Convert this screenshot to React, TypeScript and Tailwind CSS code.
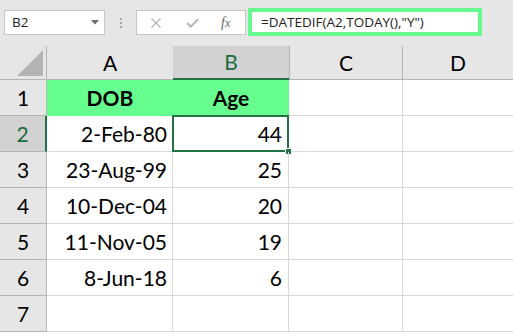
import React from "react";

const cellFont = { fontFamily: "Lato, 'Open Sans', sans-serif" };
const uiFont = { fontFamily: "'Open Sans', 'Noto Sans', sans-serif" };

const rows: { n: number; a: string; b: string }[] = [
  { n: 2, a: "2-Feb-80", b: "44" },
  { n: 3, a: "23-Aug-99", b: "25" },
  { n: 4, a: "10-Dec-04", b: "20" },
  { n: 5, a: "11-Nov-05", b: "19" },
  { n: 6, a: "8-Jun-18", b: "6" },
  { n: 7, a: "", b: "" },
];

export default function App() {
  return (
    <div className="w-[513px] h-[336px] overflow-hidden bg-white relative" style={cellFont}>
      {/* Formula bar area */}
      <div className="h-[46px] bg-[#e6e6e6] flex items-start">
        <div
          className="ml-[4px] mt-[10px] w-[101px] h-[25px] bg-white border border-[#c6c6c6] flex items-center justify-between pl-[7px] pr-[5px] text-[13.5px] text-[#222]"
          style={uiFont}
        >
          <span>B2</span>
          <svg width="8" height="5" viewBox="0 0 8 5">
            <path d="M0 0 H8 L4 4.5 Z" fill="#6d6d6d" />
          </svg>
        </div>
        <div className="ml-[15px] mt-[18px] flex flex-col gap-[2px]">
          <div className="w-[2px] h-[2px] bg-[#a9a9a9]" />
          <div className="w-[2px] h-[2px] bg-[#a9a9a9]" />
          <div className="w-[2px] h-[2px] bg-[#a9a9a9]" />
        </div>
        <div className="ml-[14px] mt-[10px] w-[110px] h-[25px] bg-white border border-[#c6c6c6] flex items-center">
          <svg className="ml-[13px]" width="12" height="10" viewBox="0 0 12 10">
            <path d="M1.5 0.5 L10.5 9.5 M10.5 0.5 L1.5 9.5" stroke="#b4b4b4" strokeWidth="1.4" fill="none" />
          </svg>
          <svg className="ml-[24px]" width="13" height="10" viewBox="0 0 13 10">
            <path d="M1 5 L4.8 8.6 L12 1.2" stroke="#b4b4b4" strokeWidth="2" fill="none" />
          </svg>
          <span
            className="ml-[22px] text-[14px] italic text-[#666] leading-none"
            style={{ fontFamily: "'Liberation Serif', serif" }}
          >
            f<span className="text-[12px]">x</span>
          </span>
        </div>
        <div
          className="ml-[2px] mt-[8px] w-[234px] h-[28px] bg-white border-[4px] border-[#68f890] flex items-center pl-[9px] text-[13.5px] text-[#222]"
          style={uiFont}
        >
          =DATEDIF(A2,TODAY(),"Y")
        </div>
      </div>

      {/* Grid */}
      <div className="grid grid-cols-[47px_126px_116px_114px_1fr] grid-rows-[34px_repeat(7,36px)] text-[21px] text-black">
        {/* Header row */}
        <div className="bg-[#e6e6e6] border-r border-b border-[#b5b5b5] relative">
          <svg className="absolute left-[17px] top-[4px]" width="27" height="27" viewBox="0 0 27 27">
            <path d="M26 0 V26 H0 Z" fill="#b3b3b3" />
          </svg>
        </div>
        <div className="bg-[#e6e6e6] border-b border-[#b5b5b5] flex items-center justify-center">A</div>
        <div className="bg-[#d2d2d2] border-b-2 border-[#217346] flex items-center justify-center text-[#1e6b41]">B</div>
        <div className="bg-[#e6e6e6] border-l border-r border-b border-[#b5b5b5] flex items-center justify-center">C</div>
        <div className="bg-[#e6e6e6] border-b border-[#b5b5b5] flex items-center justify-center">D</div>

        {/* Row 1 */}
        <div className="bg-[#e6e6e6] border-r border-b border-[#b5b5b5] flex items-center justify-center">1</div>
        <div className="bg-[#66ff8f] flex items-center justify-center font-bold">DOB</div>
        <div className="bg-[#66ff8f] flex items-center justify-center font-bold">Age</div>
        <div className="border-r border-b border-[#d9d9d9]" />
        <div className="border-b border-[#d9d9d9]" />

        {rows.map((r) => {
          const sel = r.n === 2;
          return (
            <React.Fragment key={r.n}>
              <div
                className={
                  sel
                    ? "bg-[#d2d2d2] border-r-2 border-r-[#217346] border-b border-b-[#b5b5b5] flex items-center justify-center text-[#1e6b41]"
                    : "bg-[#e6e6e6] border-r border-b border-[#b5b5b5] flex items-center justify-center"
                }
              >
                {r.n}
              </div>
              <div className="border-r border-b border-[#d9d9d9] flex items-center justify-end pr-[5px]">{r.a}</div>
              <div className="border-r border-b border-[#d9d9d9] flex items-center justify-end pr-[6px] relative">
                {r.b}
                {sel && (
                  <>
                    <div className="absolute -left-[1px] -top-[1px] right-[-1px] bottom-[-1px] border-2 border-[#217346]" />
                    <div className="absolute right-[-4px] bottom-[-4px] w-[7px] h-[7px] bg-[#217346] border border-white" />
                  </>
                )}
              </div>
              <div className="border-r border-b border-[#d9d9d9]" />
              <div className="border-b border-[#d9d9d9]" />
            </React.Fragment>
          );
        })}
      </div>
    </div>
  );
}
